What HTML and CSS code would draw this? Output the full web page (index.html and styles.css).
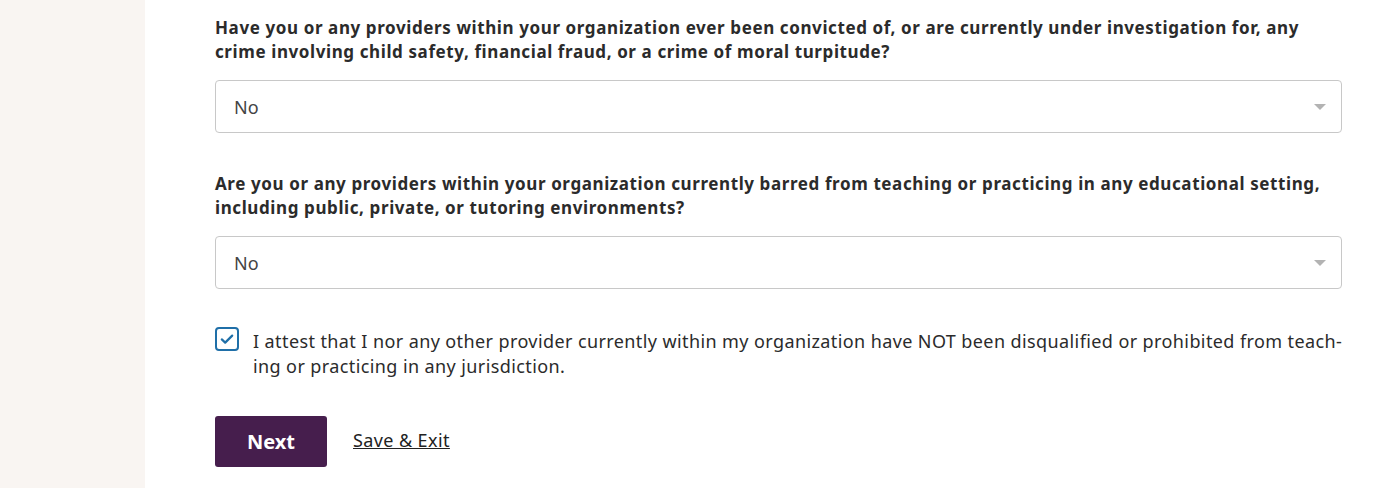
FILE: index.html
```html
<!DOCTYPE html>
<html lang="en">
<head>
  <meta charset="UTF-8">
  <title>Provider Attestation</title>
  <link rel="stylesheet" href="styles.css">
</head>
<body>
  <div class="layout">
    <aside class="sidebar"></aside>
    <main class="content">
      <div class="field">
        <label class="question" for="convicted">Have you or any providers within your organization ever been convicted of, or are currently under investigation for, any crime involving child safety, financial fraud, or a crime of moral turpitude?</label>
        <div class="select-wrap">
          <select id="convicted">
            <option>No</option>
            <option>Yes</option>
          </select>
        </div>
      </div>

      <div class="field">
        <label class="question" for="barred">Are you or any providers within your organization currently barred from teaching or practicing in any educational setting, including public, private, or tutoring environments?</label>
        <div class="select-wrap">
          <select id="barred">
            <option>No</option>
            <option>Yes</option>
          </select>
        </div>
      </div>

      <label class="attest">
        <input type="checkbox" checked>
        <span class="box">
          <svg viewBox="0 0 16 16" width="16" height="16"><path d="M2.8 8.4l3.4 3.2L13.2 4.6" fill="none" stroke="#1f6fa8" stroke-width="2.2" stroke-linecap="round" stroke-linejoin="round"/></svg>
        </span>
        <span class="attest-text">I attest that I nor any other provider currently within my organization have NOT been disqualified or prohibited from teach&shy;ing or practicing in any jurisdiction.</span>
      </label>

      <div class="actions">
        <button class="btn-next">Next</button>
        <a href="#" class="save-exit">Save &amp; Exit</a>
      </div>
    </main>
  </div>
</body>
</html>
```

FILE: styles.css
```css
body {
  margin: 0;
  font-family: "Noto Sans", "Open Sans", sans-serif;
  color: #2b2b2b;
  background: #fff;
}
.layout {
  display: flex;
  min-height: 488px;
}
.sidebar {
  width: 145px;
  flex-shrink: 0;
  background: #f9f5f2;
}
.content {
  flex: 1;
  padding: 16px 32px 0 70px;
}
.field {
  margin-bottom: 39px;
}
.question {
  display: block;
  font-weight: 700;
  font-size: 17px;
  letter-spacing: 0.6px;
  line-height: 24px;
  margin-bottom: 16px;
}
.select-wrap {
  position: relative;
}
.select-wrap::after {
  content: "";
  position: absolute;
  right: 16px;
  top: 24px;
  border-left: 6px solid transparent;
  border-right: 6px solid transparent;
  border-top: 6px solid #b3b3b3;
  pointer-events: none;
}
select {
  appearance: none;
  width: 100%;
  height: 53px;
  padding: 0 18px;
  font-family: inherit;
  font-size: 18px;
  color: #444;
  background: #fff;
  border: 1px solid #c8c8c8;
  border-radius: 4px;
}
.attest {
  display: flex;
  align-items: flex-start;
  gap: 14px;
  margin-top: -1px;
}
.attest input {
  display: none;
}
.box {
  width: 20px;
  height: 20px;
  flex-shrink: 0;
  border: 2px solid #1f6fa8;
  border-radius: 4px;
  display: flex;
  align-items: center;
  justify-content: center;
}
.attest-text {
  font-size: 18px;
  letter-spacing: 0.4px;
  line-height: 25px;
  padding-top: 2px;
  hyphens: manual;
}
.actions {
  display: flex;
  align-items: center;
  gap: 26px;
  margin-top: 37px;
}
.btn-next {
  width: 112px;
  height: 51px;
  background: #461e4d;
  color: #fff;
  border: none;
  border-radius: 3px;
  font-family: inherit;
  font-size: 20px;
  font-weight: 700;
}
.save-exit {
  color: #222;
  font-size: 18px;
  letter-spacing: 0.4px;
  text-decoration: underline;
  margin-top: -4px;
}
```
